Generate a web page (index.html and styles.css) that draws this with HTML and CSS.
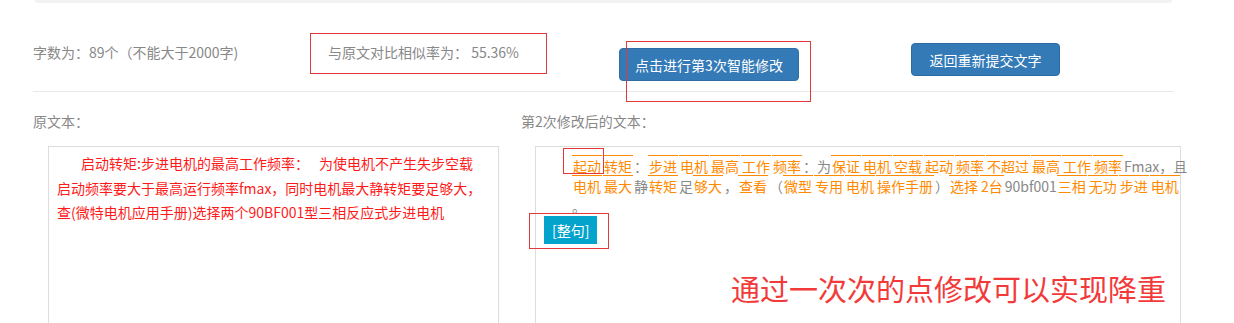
FILE: index.html
```html
<!DOCTYPE html>
<html lang="zh-CN">
<head>
    <meta charset="UTF-8">
    <meta name="viewport" content="width=device-width, initial-scale=1.0">
    <title>智能修改</title>
    <link rel="stylesheet" href="styles.css">
</head>
<body>
    <div class="page">
        <div class="top-strip"></div>

        <!-- Count, similarity and actions -->
        <div class="toolbar">
            <div class="count">字数为：89个（不能大于2000字)</div>
            <div class="similarity">与原文对比相似率为：&nbsp;55.36%</div>
            <button class="btn btn-next">点击进行第3次智能修改</button>
            <button class="btn btn-back">返回重新提交文字</button>
        </div>

        <!-- Original and rewritten text -->
        <div class="columns">
            <div class="col col-left">
                <div class="col-label">原文本：</div>
                <div class="text-box original">
                    启动转矩:步进电机的最高工作频率：　&nbsp;为使电机不产生失步空载<br>启动频率要大于最高运行频率fmax，同时电机最大静转矩要足够大，<br>查(微特电机应用手册)选择两个90BF001型三相反应式步进电机
                </div>
            </div>
            <div class="col col-right">
                <div class="col-label">第2次修改后的文本：</div>
                <div class="text-box rewrite">
                    <div class="rewrite-text"><span class="w">起动</span><span class="w">转矩</span>：<span class="w">步进</span><span class="w">电机</span><span class="w">最高</span><span class="w">工作</span><span class="w">频率</span>：为<span class="w">保证</span><span class="w">电机</span><span class="w">空载</span><span class="w">起动</span><span class="w">频率</span><span class="w">不超过</span><span class="w">最高</span><span class="w">工作</span><span class="w">频率</span>Fmax，且<br><span class="w">电机</span><span class="w">最大</span>静<span class="w">转矩</span>足<span class="w">够大</span>，<span class="w">查看</span>（<span class="w">微型</span><span class="w">专用</span><span class="w">电机</span><span class="w">操作手册</span>）<span class="w">选择</span><span class="w">2台</span>90bf001<span class="w">三相</span><span class="w">无功</span><span class="w">步进</span><span class="w">电机</span><br>。</div>
                    <button class="btn-sentence">[整句]</button>
                </div>
            </div>
        </div>

        <!-- Annotations drawn over the screenshot -->
        <div class="mark mark-similarity"></div>
        <div class="mark mark-next"></div>
        <div class="mark mark-word"></div>
        <div class="mark mark-sentence"></div>
        <div class="note">通过一次次的点修改可以实现降重</div>
    </div>
</body>
</html>
```

FILE: styles.css
```css
/* Page */
body {
    margin: 0;
    background-color: #fff;
    font-family: "Noto Sans CJK SC", "Noto Sans", sans-serif;
    font-size: 14px;
    color: #888;
    overflow: hidden;
}

.page {
    position: relative;
    width: 1234px;
    height: 323px;
    overflow: hidden;
}

.top-strip {
    margin-left: 35px;
    width: 1137px;
    height: 3px;
    background-color: #f2f2f2;
    border-radius: 0 0 4px 4px;
}

/* Toolbar row */
.toolbar {
    display: flex;
    align-items: flex-start;
    margin-left: 33px;
    width: 1141px;
    height: 88px;
    border-bottom: 1px solid #e8e8e8;
}

.count {
    width: 295px;
    margin-top: 39px;
    line-height: 20px;
}

.similarity {
    width: 291px;
    margin-top: 39px;
    line-height: 20px;
}

.btn {
    height: 33px;
    padding: 0;
    font-family: inherit;
    font-size: 14px;
    color: #fff;
    background-color: #337ab7;
    border: 1px solid #2e6da4;
    border-radius: 4px;
}

.btn-next {
    width: 180px;
    margin-top: 45px;
}

.btn-back {
    width: 149px;
    margin-top: 40px;
    margin-left: 112px;
}

/* Text columns */
.columns {
    display: flex;
    margin-left: 33px;
    padding-top: 19px;
}

.col-left {
    width: 488px;
}

.col-label {
    line-height: 20px;
    color: #888;
}

.text-box {
    margin-top: 15px;
    height: 178px;
    box-sizing: border-box;
    border: 1px solid #ddd;
}

.original {
    margin-left: 15px;
    width: 451px;
    padding: 4px 8px;
    line-height: 24.5px;
    text-indent: 24px;
    color: #ff1a1a;
}

.rewrite {
    margin-left: 14px;
    width: 646px;
    padding: 9px 0 0 8px;
}

.rewrite-text {
    width: 620px;
    margin-left: 28px;
    line-height: 20px;
    white-space: nowrap;
    color: #888;
}

.rewrite-text .w {
    color: #ff8a00;
    border-top: 1px solid #ff8a00;
    padding: 0 1px;
    margin-right: 1px;
}

.btn-sentence {
    display: block;
    height: 28px;
    padding: 0 8px;
    font-family: inherit;
    font-size: 14px;
    color: #fff;
    background-color: #04a3cc;
    border: none;
}

/* Annotations */
.mark {
    position: absolute;
    border: 1px solid #e4393c;
}

.mark-similarity {
    left: 310px;
    top: 33px;
    width: 235px;
    height: 39px;
}

.mark-next {
    left: 626px;
    top: 41px;
    width: 183px;
    height: 59px;
}

.mark-word {
    left: 563px;
    top: 148px;
    width: 39px;
    height: 24px;
}

.mark-sentence {
    left: 529px;
    top: 213px;
    width: 78px;
    height: 34px;
}

.note {
    position: absolute;
    left: 731px;
    top: 274px;
    font-size: 29px;
    line-height: 29px;
    color: #f23a3a;
    white-space: nowrap;
}
```
